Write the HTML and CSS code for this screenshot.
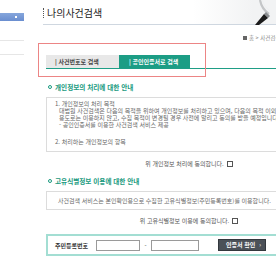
FILE: index.html
```html
<!DOCTYPE html>
<html lang="ko">
<head>
<meta charset="utf-8">
<link rel="stylesheet" href="styles.css">
</head>
<body>
<div class="page">
  <aside class="sidebar">
    <div class="side-active"><span class="side-arrow"></span></div>
    <div class="side-line first"></div>
    <div class="side-line"></div>
  </aside>
  <main class="main">
    <header class="head">
      <h1 class="title">나의사건검색</h1>
      <svg class="magnifier" width="36" height="25" viewBox="0 0 36 25">
        <path d="M21 0 A22 22 0 0 0 30 14" fill="none" stroke="#c4c6c8" stroke-width="2.2"/>
        <path d="M23 0 A20 20 0 0 0 31 11" fill="none" stroke="#eef0f2" stroke-width="1"/>
        <path d="M27 12 L31 16 L29 18 L25 14 Z" fill="#8a8d90"/>
        <path d="M25 14 L29 18 L20 25 L16 25 Z" fill="#1b1b1b"/>
      </svg>
    </header>
    <div class="crumb"><span class="home-ico"></span>홈 &gt; 사건검색 &gt; 나의사건검색</div>
    <div class="tabs">
      <div class="tab">| 사건번호로 검색</div>
      <div class="tab on">| 공인인증서로 검색</div>
    </div>
    <div class="content">
      <h2 class="sec"><span class="dot"></span>개인정보의 처리에 대한 안내</h2>
      <div class="box box1">
        <p>1. 개인정보의 처리 목적</p>
        <p class="ind">대법원 사건검색은 다음의 목적을 위하여 개인정보를 처리하고 있으며, 다음의 목적 이외의</p>
        <p class="ind">용도로는 이용하지 않고, 수집 목적이 변경될 경우 사전에 알리고 동의를 받을 예정입니다.</p>
        <p class="ind">- 공인인증서를 이용한 사건검색 서비스 제공</p>
        <p class="gap">2. 처리하는 개인정보의 항목</p>
      </div>
      <div class="agree">위 개인정보 처리에 동의합니다. <span class="chk"></span></div>
      <h2 class="sec sec2"><span class="dot"></span>고유식별정보 이용에 대한 안내</h2>
      <div class="box box2">
        <p>사건검색 서비스는 본인확인용으로 수집한 고유식별정보(주민등록번호)를 이용합니다.</p>
      </div>
      <div class="agree agree2">위 고유식별정보 이용에 동의합니다. <span class="chk"></span></div>
      <div class="idbox">
        <span class="idlabel">주민등록번호</span>
        <span class="inp inp1"></span>
        <span class="dash">-</span>
        <span class="inp inp2"></span>
        <span class="btn">인증서 확인<span class="btn-arr">›</span></span>
      </div>
    </div>
  </main>
  <div class="highlight"></div>
</div>
</body>
</html>
```
FILE: styles.css
```css
* { box-sizing: border-box; }
html, body { margin: 0; padding: 0; }
body {
  width: 276px;
  height: 260px;
  overflow: hidden;
  background: #fff;
  font-family: "Noto Sans CJK KR", "Noto Sans", sans-serif;
  color: #555;
}
.page {
  position: relative;
  display: flex;
  width: 276px;
  height: 260px;
}
.sidebar {
  width: 24px;
  flex: none;
  padding-top: 13px;
}
.side-active {
  position: relative;
  height: 8px;
  background: linear-gradient(#86a6dc, #6a8ed0);
}
.side-arrow {
  position: absolute;
  left: 15px;
  top: 3px;
  width: 2px;
  height: 2px;
  background: #fff;
}
.side-line {
  height: 1px;
  background: #e6e6e6;
  margin-top: 13px;
}
.side-line.first { margin-top: 19px; }
.main {
  margin-left: 19px;
  flex: none;
  width: 300px;
}
.head {
  display: flex;
  align-items: flex-start;
  height: 25px;
  border-bottom: 1px solid #cfd7e0;
  background: linear-gradient(90deg, #fff 0, #fff 150px, #f2f3f4 210px);
}
.title {
  margin: 8px 0 0;
  padding-left: 3px;
  border-left: 1px dotted #555;
  font-size: 10px;
  line-height: 10px;
  font-weight: normal;
  color: #222;
  letter-spacing: 0;
}
.magnifier {
  margin-left: 137px;
  flex: none;
}
.crumb {
  margin-top: 9px;
  padding-left: 200px;
  font-size: 5.5px;
  line-height: 8px;
  color: #888;
  white-space: nowrap;
  display: flex;
  align-items: center;
}
.home-ico {
  width: 4px;
  height: 4px;
  background: #666;
  margin-right: 2px;
}
.tabs {
  margin: 13px 0 0 3px;
  display: flex;
  border-bottom: 1px solid #1f9e86;
}
.tab {
  height: 13px;
  width: 73px;
  background: #e8e8e8;
  color: #444;
  font-size: 6px;
  line-height: 13px;
  padding-left: 9px;
  font-weight: bold;
  white-space: nowrap;
}
.tab.on {
  width: 71px;
  background: #1c9d85;
  color: #fff;
  padding-left: 10px;
}
.content {
  width: 286px;
  margin-left: 3px;
}
.sec {
  margin: 14px 0 0;
  padding-left: 2px;
  display: flex;
  align-items: center;
  font-size: 6.6px;
  line-height: 8px;
  font-weight: bold;
  color: #1a9a80;
  white-space: nowrap;
}
.sec2 { margin-top: 9px; }
.dot {
  width: 4px;
  height: 4px;
  border: 1px solid #1a9a80;
  border-radius: 50%;
  margin-right: 3px;
}
.box {
  border: 1px solid #dcdcdc;
  font-size: 6px;
  line-height: 7px;
  color: #666;
  white-space: nowrap;
}
.box p { margin: 0; }
.box1 {
  margin-top: 6px;
  padding: 2px 0 6px 8px;
}
.box1 .ind { padding-left: 4px; }
.box1 .gap { margin-top: 9.5px; }
.box2 {
  margin-top: 6px;
  padding: 5.5px 0 5px 11px;
}
.agree {
  margin-top: 8px;
  display: flex;
  justify-content: center;
  align-items: center;
  font-size: 6px;
  line-height: 8px;
  color: #555;
  white-space: nowrap;
}
.agree2 { margin-top: 7px; }
.chk {
  width: 6px;
  height: 6px;
  border: 1px solid #555;
  background: #fff;
  margin-left: 3px;
}
.idbox {
  margin-top: 9px;
  height: 22px;
  border: 2px solid #a3ded3;
  display: flex;
  align-items: center;
  padding-left: 7px;
  white-space: nowrap;
}
.idlabel {
  width: 41px;
  font-size: 6px;
  font-weight: bold;
  color: #333;
}
.inp {
  height: 11px;
  border: 1px solid #9a9a9a;
  background: #fff;
}
.inp1 { width: 44px; }
.inp2 { width: 48px; }
.dash {
  width: 11px;
  text-align: center;
  font-size: 6px;
  color: #444;
}
.btn {
  margin-left: 19px;
  width: 48px;
  height: 12px;
  background: #4b5158;
  border: 1px solid #33383d;
  color: #fff;
  font-size: 6px;
  font-weight: bold;
  line-height: 10px;
  padding-left: 7px;
  position: relative;
}
.btn-arr {
  position: absolute;
  right: 4px;
  top: 0;
  font-weight: normal;
}
.highlight {
  position: absolute;
  left: 38px;
  top: 43px;
  width: 168px;
  height: 34px;
  border: 1.5px solid #ec8585;
}
```
